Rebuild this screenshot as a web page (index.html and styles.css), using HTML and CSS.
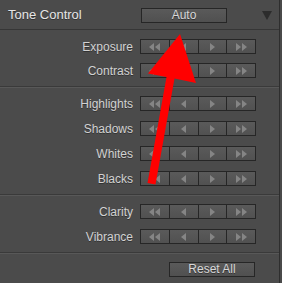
FILE: index.html
```html
<!DOCTYPE html>
<html lang="en">
<head>
    <meta charset="UTF-8">
    <meta name="viewport" content="width=device-width, initial-scale=1.0">
    <title>Tone Control</title>
    <link rel="stylesheet" href="styles.css">
</head>
<body>
    <div class="panel">
        <!-- Intestazione del pannello -->
        <header class="panel-head">
            <span class="title">Tone Control</span>
            <button class="btn auto">Auto</button>
            <span class="collapse"></span>
        </header>

        <section class="group first">
            <div class="row">
                <span class="label">Exposure</span>
                <div class="steps">
                    <span class="step"><i class="tri l"></i><i class="tri l"></i></span>
                    <span class="step"><i class="tri l"></i></span>
                    <span class="step"><i class="tri r"></i></span>
                    <span class="step"><i class="tri r"></i><i class="tri r"></i></span>
                </div>
            </div>
            <div class="row">
                <span class="label">Contrast</span>
                <div class="steps">
                    <span class="step"><i class="tri l"></i><i class="tri l"></i></span>
                    <span class="step"><i class="tri l"></i></span>
                    <span class="step"><i class="tri r"></i></span>
                    <span class="step"><i class="tri r"></i><i class="tri r"></i></span>
                </div>
            </div>
        </section>

        <section class="group">
            <div class="row">
                <span class="label">Highlights</span>
                <div class="steps">
                    <span class="step"><i class="tri l"></i><i class="tri l"></i></span>
                    <span class="step"><i class="tri l"></i></span>
                    <span class="step"><i class="tri r"></i></span>
                    <span class="step"><i class="tri r"></i><i class="tri r"></i></span>
                </div>
            </div>
            <div class="row">
                <span class="label">Shadows</span>
                <div class="steps">
                    <span class="step"><i class="tri l"></i><i class="tri l"></i></span>
                    <span class="step"><i class="tri l"></i></span>
                    <span class="step"><i class="tri r"></i></span>
                    <span class="step"><i class="tri r"></i><i class="tri r"></i></span>
                </div>
            </div>
            <div class="row">
                <span class="label">Whites</span>
                <div class="steps">
                    <span class="step"><i class="tri l"></i><i class="tri l"></i></span>
                    <span class="step"><i class="tri l"></i></span>
                    <span class="step"><i class="tri r"></i></span>
                    <span class="step"><i class="tri r"></i><i class="tri r"></i></span>
                </div>
            </div>
            <div class="row">
                <span class="label">Blacks</span>
                <div class="steps">
                    <span class="step"><i class="tri l"></i><i class="tri l"></i></span>
                    <span class="step"><i class="tri l"></i></span>
                    <span class="step"><i class="tri r"></i></span>
                    <span class="step"><i class="tri r"></i><i class="tri r"></i></span>
                </div>
            </div>
        </section>

        <section class="group">
            <div class="row">
                <span class="label">Clarity</span>
                <div class="steps">
                    <span class="step"><i class="tri l"></i><i class="tri l"></i></span>
                    <span class="step"><i class="tri l"></i></span>
                    <span class="step"><i class="tri r"></i></span>
                    <span class="step"><i class="tri r"></i><i class="tri r"></i></span>
                </div>
            </div>
            <div class="row">
                <span class="label">Vibrance</span>
                <div class="steps">
                    <span class="step"><i class="tri l"></i><i class="tri l"></i></span>
                    <span class="step"><i class="tri l"></i></span>
                    <span class="step"><i class="tri r"></i></span>
                    <span class="step"><i class="tri r"></i><i class="tri r"></i></span>
                </div>
            </div>
        </section>

        <footer class="group foot">
            <button class="btn reset">Reset All</button>
        </footer>

        <!-- Freccia rossa di annotazione -->
        <svg class="arrow" width="282" height="283" viewBox="0 0 282 283">
            <polygon fill="#ff0000" points="180,34 196,83 174.5,78.5 155.5,184.5 147.5,183 166.5,77 148,73.5"/>
        </svg>
    </div>
</body>
</html>
```

FILE: styles.css
```css
body {
    margin: 0;
    padding: 0;
    background-color: #4a4a4a;
    font-family: "Liberation Sans", Arial, sans-serif;
}

.panel {
    position: relative;
    width: 280px;
    height: 283px;
    background-color: #4b4b4b;
    border-right: 1px solid #2e2e2e;
    box-sizing: border-box;
}

.panel-head {
    display: grid;
    grid-template-columns: 141px 86px 1fr;
    align-items: center;
    height: 29px;
    border-bottom: 1px solid #363636;
}

.title {
    padding-left: 8px;
    font-size: 13px;
    color: #e6e6e6;
    text-shadow: 0 1px 0 rgba(0, 0, 0, 0.35);
}

.btn {
    height: 15px;
    padding: 0;
    border: 1px solid #262626;
    background: linear-gradient(#5a5a5a, #505050);
    color: #d8d8d8;
    font-family: "Liberation Sans", Arial, sans-serif;
    font-size: 12px;
    line-height: 13px;
    text-shadow: 0 1px 0 rgba(0, 0, 0, 0.4);
}

.auto {
    width: 86px;
    margin-top: 1px;
}

.collapse {
    justify-self: end;
    margin-right: 7px;
    margin-top: 1px;
    width: 0;
    height: 0;
    border-left: 5px solid transparent;
    border-right: 5px solid transparent;
    border-top: 9px solid #2c2c2c;
}

.group {
    display: flex;
    flex-direction: column;
    gap: 10px;
    padding: 8px 0;
    border-top: 1px solid #585858;
    border-bottom: 1px solid #3a3a3a;
}

.group.first {
    gap: 9px;
    padding-top: 9px;
    border-top: none;
}

.row {
    display: flex;
    align-items: center;
    height: 15px;
}

.label {
    width: 133px;
    padding-right: 7px;
    box-sizing: content-box;
    text-align: right;
    font-size: 12px;
    color: #d2d2d2;
    text-shadow: 0 1px 0 rgba(0, 0, 0, 0.35);
}

.steps {
    display: flex;
    width: 116px;
    height: 15px;
    border: 1px solid #262626;
    box-sizing: border-box;
}

.step {
    flex: 1;
    display: flex;
    align-items: center;
    justify-content: center;
    gap: 1px;
    background: linear-gradient(#5a5a5a, #515151);
    border-left: 1px solid #262626;
}

.step:first-child {
    border-left: none;
}

.tri {
    width: 0;
    height: 0;
    border-top: 4px solid transparent;
    border-bottom: 4px solid transparent;
}

.tri.l {
    border-right: 5px solid #858585;
}

.tri.r {
    border-left: 5px solid #858585;
}

.foot {
    align-items: flex-end;
    padding-right: 24px;
    padding-bottom: 0;
    border-bottom: none;
}

.reset {
    width: 86px;
}

.arrow {
    position: absolute;
    left: 0;
    top: 0;
    pointer-events: none;
}
```
